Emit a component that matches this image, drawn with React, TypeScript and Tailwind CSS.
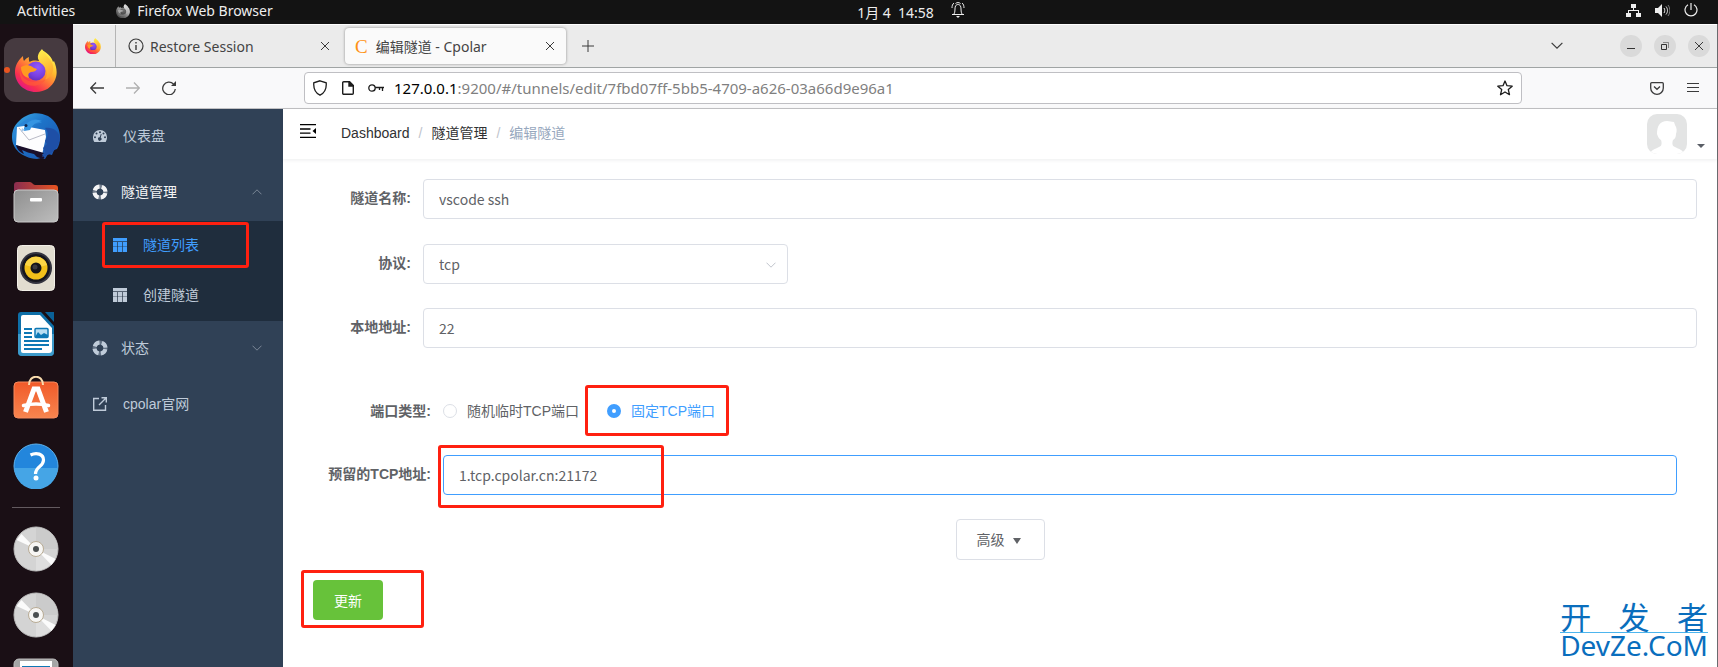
import React, { useState } from "react";

type IconProps = { className?: string };

function FirefoxIcon({ className, id }: IconProps & { id: string }) {
  return (
    <svg viewBox="0 0 42 43" className={className} aria-hidden="true">
      <defs>
        <linearGradient id={`${id}-body`} x1="0.85" y1="0.1" x2="0.2" y2="0.95">
          <stop offset="0" stopColor="#fff44f" />
          <stop offset="0.3" stopColor="#ffb92e" />
          <stop offset="0.55" stopColor="#ff7139" />
          <stop offset="0.8" stopColor="#f8304f" />
          <stop offset="1" stopColor="#e31587" />
        </linearGradient>
        <radialGradient id={`${id}-globe`} cx="0.6" cy="0.3" r="0.8">
          <stop offset="0" stopColor="#9059ff" />
          <stop offset="0.6" stopColor="#7a3fe0" />
          <stop offset="1" stopColor="#5b2bb8" />
        </radialGradient>
        <linearGradient id={`${id}-tail`} x1="0" y1="0" x2="0.3" y2="1">
          <stop offset="0" stopColor="#fff44f" />
          <stop offset="1" stopColor="#ffa52e" />
        </linearGradient>
      </defs>
      <path
        d="M8 7c0 2 .4 3.600 1 5 1.400-1.800 3-3.200 5-4-.4 2-.2 3.600.6 5C18 11 24 11 28 14L27 1c7 4 10 8 11 12l1-1c3 7 3.600 13 1 19-3 7-10 12-19 12C9 43 0 34 0 23 0 18 2 12 8 7z"
        fill={`url(#${id}-body)`}
      />
      <circle cx="21" cy="22" r="9.500" fill={`url(#${id}-globe)`} />
      <path
        d="M27 0c-5 5-6 10 0 15 5 4 7 9 3 16 6-3 9-8 8-14-1-7-7-9-11-17z"
        fill={`url(#${id}-tail)`}
      />
      <path d="M6 18c5-3 10-2 13 1l3 1c-1 2-3 3-6 3-3 1-3 3-2 6-5-1-8-5-8-11z" fill="#ff9a20" />
      <path d="M5 20c1 7 4 10 9 12 6 2 12 1 17-2-4 6-11 8-18 6C7 34 4 28 5 20z" fill="#ff5a38" opacity="0.7" />
    </svg>
  );
}

function ThunderbirdIcon() {
  return (
    <svg viewBox="0 0 48 48" className="size-12" aria-hidden="true">
      <defs>
        <linearGradient id="tb-body" x1="0" y1="0" x2="1" y2="1">
          <stop offset="0" stopColor="#3fb0e8" />
          <stop offset="0.4" stopColor="#1d74c9" />
          <stop offset="1" stopColor="#1c4fa8" />
        </linearGradient>
      </defs>
      <path d="M16 3C22 0 30 1 36 4c8 5 12 13 12 21 0 5-1 9-3 12l-3 1-2 5-4-1-3 5-4-1-4 1C10 46 0 37 0 25 0 15 6 9 12 5z" fill="url(#tb-body)" />
      <path d="M1 23c0-6 6-11 13-15 6-3 12-1 16 3-7 0-12 2-17 6z" fill="#2b86d6" />
      <path d="M5 15l7-1 21 4 1 7-4 18L4 33z" fill="#fdfdfe" />
      <path d="M7 16l10 12 16-6" fill="none" stroke="#b9bac6" strokeWidth="1" />
      <path d="M4 33l28 8-2 2c3 2 3 3 1 4l-6-2-3-3c-4-1-8-2-12-4l2 4C7 40 5 37 4 33z" fill="#1a0f2a" />
      <path d="M33 16c4 4 3 9 0 13l2 3-4 4 2 4-3 5c9-2 16-8 18-18-1-9-8-12-15-11z" fill="#1e4fa6" />
      <path d="M12 16c3-7 10-10 18-7-6 1-10 4-12 9l-6 1z" fill="#3595e2" />
      <circle cx="14" cy="13.500" r="1.500" fill="#10264f" />
      <path d="M10 16l-1 4 4-2z" fill="#a9c9ea" />
    </svg>
  );
}

function FilesIcon() {
  return (
    <svg viewBox="0 0 46 42" className="w-[46px]" aria-hidden="true">
      <defs>
        <linearGradient id="folder-back" x1="0" x2="1">
          <stop offset="0" stopColor="#8a2d50" />
          <stop offset="1" stopColor="#e95420" />
        </linearGradient>
        <linearGradient id="folder-front" x1="0" y1="0" x2="1" y2="1">
          <stop offset="0" stopColor="#8f8f8f" />
          <stop offset="1" stopColor="#bdbdbd" />
        </linearGradient>
      </defs>
      <path d="M1 4a3 3 0 013-3h13c2 0 3 3 5 3h20a3 3 0 013 3v14H1z" fill="url(#folder-back)" />
      <rect x="1" y="9" width="44" height="32" rx="4" fill="url(#folder-front)" stroke="#c9c9c9" />
      <rect x="17" y="17" width="12" height="3.500" rx="1" fill="#fff" />
    </svg>
  );
}

function RhythmboxIcon() {
  return (
    <svg viewBox="0 0 38 46" className="w-[38px]" aria-hidden="true">
      <rect x="0.500" y="0.500" width="37" height="45" rx="4" fill="#e2ddd0" stroke="#f3f0e8" />
      <circle cx="19" cy="23" r="16" fill="#34343f" />
      <circle cx="19" cy="23" r="14" fill="#15151d" />
      <circle cx="19" cy="23" r="11.500" fill="#f2c01a" />
      <path d="M8 20a11.500 11.500 0 0122 0L19 23z" fill="#fbd546" />
      <circle cx="19" cy="23" r="5.500" fill="#15151a" />
      <circle cx="18" cy="22" r="2.500" fill="#3a3a40" />
    </svg>
  );
}

function WriterIcon() {
  return (
    <svg viewBox="0 0 38 46" className="w-[38px]" aria-hidden="true">
      <path d="M4 1h20l13 14v26a4 4 0 01-4 4H5a4 4 0 01-4-4V4a3 3 0 013-3z" fill="#0e6fa8" />
      <path d="M1 23h36v18a4 4 0 01-4 4H5a4 4 0 01-4-4z" fill="#3d9bcb" />
      <path d="M28 1h9v10z" fill="#0a6197" />
      <path d="M6 4h17l12 13v22a3 3 0 01-3 3H6a2 2 0 01-2-2V6a2 2 0 012-2z" fill="#fff" />
      <path d="M7 18h8M7 22h8M7 26h8M7 30h25M7 34h25M7 38h18" stroke="#0e78b5" strokeWidth="2" />
      <rect x="18" y="17.500" width="13" height="9" rx="1" fill="#b9def2" stroke="#0e78b5" strokeWidth="1.500" />
      <path d="M18 26l3-5 3 3 3-2 4 2v2z" fill="#0e78b5" />
    </svg>
  );
}

function SoftwareIcon() {
  return (
    <svg viewBox="0 1 46 48" className="w-[46px]" aria-hidden="true">
      <defs>
        <linearGradient id="bag" x1="0" y1="0" x2="0" y2="1">
          <stop offset="0" stopColor="#f15a29" />
          <stop offset="1" stopColor="#f7854f" />
        </linearGradient>
      </defs>
      <rect x="1" y="7" width="44" height="36" rx="4" fill="url(#bag)" stroke="#f58a5e" />
      <path d="M16 10c0-11 14-11 14 0" fill="none" stroke="#f9dcae" strokeWidth="2" />
      <path d="M12.500 37L21 14h4l8.500 23" fill="none" stroke="#fff" strokeWidth="5" />
      <path d="M10.500 30.500q12.500-3 25 0" fill="none" stroke="#fff" strokeWidth="3.500" strokeLinecap="round" />
    </svg>
  );
}

function HelpIcon() {
  return (
    <svg viewBox="0 0 46 46" className="w-[46px]" aria-hidden="true">
      <circle cx="23" cy="23" r="22" fill="#2386dc" stroke="#5db2ee" />
      <path d="M1.500 25h43a21.500 21.500 0 01-43 0z" fill="#45a5e6" />
      <path d="M17.500 12c6-3 13-1 13 5 0 7-8 6-8 14" fill="none" stroke="#fff" strokeWidth="3.200" />
      <circle cx="23" cy="35" r="2.500" fill="#fff" />
    </svg>
  );
}

function DiscIcon() {
  return (
    <svg viewBox="0 0 46 46" className="w-[46px]" aria-hidden="true">
      <circle cx="23" cy="23" r="22" fill="#d4d4d4" stroke="#bdbdbd" />
      <path d="M23 23V1.500A21.500 21.500 0 0144.500 23z" fill="#cbcbcb" />
      <path d="M23 23v21.500A21.500 21.500 0 0042 33z" fill="#dedede" />
      <path d="M23 23L3.500 14l5-6zM23 23l19.500 10-4 6z" fill="#fbfbfb" />
      <circle cx="23" cy="23" r="7.500" fill="#f7f6f4" stroke="#b8ab94" />
      <circle cx="23" cy="23" r="3" fill="#4b4f50" />
    </svg>
  );
}

function FloppyIcon() {
  return (
    <svg viewBox="0 0 46 46" className="w-[46px]" aria-hidden="true">
      <rect x="1" y="1" width="44" height="44" rx="5" fill="#a4a5a5" stroke="#bdbdbd" />
      <rect x="7" y="3" width="32" height="26" fill="#fff" />
      <path d="M9 9h28" stroke="#0e78b5" strokeWidth="2" />
    </svg>
  );
}

function GaugeIcon() {
  return (
    <svg viewBox="0 0 14 12" className="w-3.5 shrink-0" aria-hidden="true">
      <path
        fillRule="evenodd"
        fill="currentColor"
        d="M7 0a7 7 0 017 7c0 2-.5 3.500-1.300 5H1.300A8 8 0 010 7a7 7 0 017-7zM7 1.200a1 1 0 100 2 1 1 0 000-2zM3.500 2.600a1 1 0 100 2 1 1 0 000-2zM10.500 2.600a1 1 0 100 2 1 1 0 000-2zM2 6.200a1 1 0 100 2 1 1 0 000-2zM12 6.200a1 1 0 100 2 1 1 0 000-2zM7.800 4l-1.100 3.300a1.700 1.700 0 101 .300L8.700 4.300z"
      />
    </svg>
  );
}

function RingIcon() {
  return (
    <svg viewBox="0 0 16 16" className="size-4 shrink-0" aria-hidden="true">
      <circle cx="8" cy="8" r="5.500" fill="none" stroke="currentColor" strokeWidth="4" opacity="0.35" />
      <circle cx="8" cy="8" r="5.500" fill="none" stroke="currentColor" strokeWidth="4" strokeDasharray="6.240 2.400" strokeDashoffset="-1.200" />
    </svg>
  );
}

function TableIcon() {
  return (
    <svg viewBox="0 0 14 14" className="size-3.5 shrink-0" aria-hidden="true">
      <path d="M0 0h14v14H0z" fill="currentColor" />
      <path d="M0 3.500h14M4.500 4v10M9.500 4v10" stroke="#1f2d3d" opacity="0.65" />
      <path d="M0 8.500h14" stroke="#1f2d3d" opacity="0.35" />
    </svg>
  );
}

function LinkIcon() {
  return (
    <svg viewBox="0 0 14 14" className="size-3.5 shrink-0" fill="none" stroke="currentColor" strokeWidth="1.400" aria-hidden="true">
      <path d="M6 1.500H.7v11.800h11.800V8M8.500.7h4.800v4.800M13 1L6 8" />
    </svg>
  );
}

function Chevron({ up = false, className = "" }: { up?: boolean; className?: string }) {
  return (
    <svg viewBox="0 0 10 6" className={`w-2.5 ${className}`} fill="none" stroke="currentColor" aria-hidden="true">
      <path d={up ? "M.5 5.300L5 .8l4.500 4.500" : "M.5.7L5 5.200 9.500.7"} />
    </svg>
  );
}

function CloseIcon() {
  return (
    <svg viewBox="0 0 8 8" className="size-2" fill="none" stroke="#3b3b3b" aria-hidden="true">
      <path d="M0 0l8 8M8 0L0 8" />
    </svg>
  );
}

// red frame used to call out a control
function Mark({ className }: { className: string }) {
  return <span aria-hidden="true" className={`pointer-events-none absolute rounded-[3px] border-3 border-[#ff2010] ${className}`} />;
}

const dockItems = [
  { name: "Thunderbird", icon: <ThunderbirdIcon /> },
  { name: "Files", icon: <FilesIcon /> },
  { name: "Rhythmbox", icon: <RhythmboxIcon /> },
  { name: "Writer", icon: <WriterIcon /> },
  { name: "Software", icon: <SoftwareIcon /> },
  { name: "Help", icon: <HelpIcon /> },
];

const mounts = [
  { name: "Disc 1", icon: <DiscIcon /> },
  { name: "Disc 2", icon: <DiscIcon /> },
  { name: "Floppy", icon: <FloppyIcon /> },
];

function TopBar() {
  return (
    <header className="grid h-6 shrink-0 grid-cols-3 items-center bg-[#131313] text-[14px] leading-5 text-[#eeeeee]">
      <div className="flex items-center pb-0.5 pl-[17px]">
        <button>Activities</button>
        <button className="ml-[41px] flex items-center gap-[7px]">
          <FirefoxIcon id="fx-top" className="w-3.5 grayscale" />
          Firefox Web Browser
        </button>
      </div>
      <div className="flex items-center justify-center pl-[104px]">
        <span className="pt-0.5 whitespace-pre">1月 4  14:58</span>
        <svg viewBox="0 0 14 16" className="mb-1 ml-[17px] w-3.5" fill="none" stroke="#eeeeee" aria-hidden="true">
          <path d="M1 12.500h12M3 12c1.500-2 .5-6 1.500-8 1-2 4-2 5 0s0 6 1.500 8M1 6c0-2 .5-4 2-5M13 6c0-2-.5-4-2-5M4.500 1.500C6 .3 8 .3 9.500 1.500" />
          <path d="M5 14h4l-2 2z" fill="#eeeeee" stroke="none" />
        </svg>
      </div>
      <div className="flex items-center justify-end gap-3.5 pr-5 pb-1">
        <svg viewBox="0 0 15 13" className="w-[15px]" fill="#eeeeee" aria-hidden="true">
          <path d="M5 0h5v4H8v2h5v3h2v4h-5V9h2V7H3v2h2v4H0V9h2V6h5V4H5z" />
        </svg>
        <svg viewBox="0 0 15 13" className="w-[15px]" fill="none" stroke="#eeeeee" aria-hidden="true">
          <path d="M0 4h3l4-4v13L3 9H0z" fill="#eeeeee" stroke="none" />
          <path d="M9 4c1 1.500 1 3.500 0 5M11 2.500c2 2.500 2 5.500 0 8" />
          <path d="M13 1c2.500 3.500 2.500 7.500 0 11" opacity="0.5" />
        </svg>
        <svg viewBox="0 0 14 14" className="w-3.5" fill="none" stroke="#eeeeee" strokeWidth="1.200" aria-hidden="true">
          <path d="M7 0v7M4 1.700a6 6 0 106 0" />
        </svg>
      </div>
    </header>
  );
}

function Dock() {
  return (
    <nav aria-label="Dock" className="flex w-[73px] shrink-0 flex-col items-center overflow-hidden bg-[#1a0f15] pt-[13px] pr-px">
      <button aria-label="Firefox" className="relative flex h-[66px] w-full shrink-0 items-center justify-center">
        <span className="flex size-16 items-center justify-center rounded-xl bg-[#463a40]">
          <FirefoxIcon id="fx-dock" className="w-[42px]" />
        </span>
        <span className="absolute left-1 size-1.5 rounded-full bg-[#e95420]" />
      </button>
      {dockItems.map((d) => (
        <button key={d.name} aria-label={d.name} className="flex h-[66px] shrink-0 items-center justify-center">
          {d.icon}
        </button>
      ))}
      <hr className="my-2 h-px w-12 shrink-0 border-0 bg-[#635a5f]" />
      {mounts.map((d) => (
        <button key={d.name} aria-label={d.name} className="flex h-[66px] shrink-0 items-center justify-center">
          {d.icon}
        </button>
      ))}
    </nav>
  );
}

function TabBar() {
  return (
    <div className="flex h-11 shrink-0 items-center border-t border-b border-t-white border-b-[#a0a4a4] bg-[#ebebeb] text-[14px] text-[#444444]">
      <button aria-label="Pinned tab" className="flex h-full w-[43px] items-center justify-center border-r border-[#b5b5b5] pr-0.5">
        <FirefoxIcon id="fx-tab" className="w-4" />
      </button>
      <div className="flex w-[229px] items-center pr-4 pl-3">
        <svg viewBox="0 0 16 16" className="mr-1.5 size-4" fill="none" stroke="#3b3b3b" aria-hidden="true">
          <circle cx="8" cy="8" r="7" strokeWidth="1.200" />
          <path d="M8 7v5M8 4v1.500" strokeWidth="1.400" />
        </svg>
        <span className="flex-1">Restore Session</span>
        <button aria-label="Close Restore Session"><CloseIcon /></button>
      </div>
      <div className="flex h-9 w-[221px] items-center rounded bg-[#fafafa] pr-3 pl-2.5 shadow-[0_0_3px_rgba(0,0,0,0.4)]">
        <span aria-hidden="true" className="mr-2 font-[Liberation_Serif,serif] text-[19px] leading-none text-[#ff9214]">C</span>
        <span className="flex-1">编辑隧道 - Cpolar</span>
        <button aria-label="Close Cpolar"><CloseIcon /></button>
      </div>
      <button aria-label="New tab" className="ml-4">
        <svg viewBox="0 0 12 12" className="size-3" stroke="#3b3b3b" aria-hidden="true">
          <path d="M6 0v12M0 6h12" />
        </svg>
      </button>
      <div className="ml-auto flex items-center gap-3 pr-[7px]">
        <button aria-label="List all tabs" className="mr-[45px]">
          <Chevron className="w-3 text-[#3b3b3b]" />
        </button>
        <button aria-label="Minimize" className="flex size-[22px] items-center justify-center rounded-full bg-[#dadada]">
          <span className="mt-1 h-px w-2 bg-[#333333]" />
        </button>
        <button aria-label="Restore" className="flex size-[22px] items-center justify-center rounded-full bg-[#dadada]">
          <svg viewBox="0 0 8 8" className="size-2" fill="none" stroke="#333333" aria-hidden="true">
            <path d="M.5 2.500h5v5h-5z" />
            <path d="M2 .5h5.500V6" opacity="0.5" />
          </svg>
        </button>
        <button aria-label="Close" className="flex size-[22px] items-center justify-center rounded-full bg-[#dadada]">
          <CloseIcon />
        </button>
      </div>
    </div>
  );
}

function UrlBar() {
  const [url] = useState({ host: "127.0.0.1", path: ":9200/#/tunnels/edit/7fbd07ff-5bb5-4709-a626-03a66d9e96a1" });
  return (
    <div className="flex h-[41px] shrink-0 items-center border-b border-[#c2c2c4] bg-[#f9f9fa] pr-[18px] pl-[17px] text-[#3b3b3b]">
      <div className="flex w-[214px] items-center gap-[22px]">
        <button aria-label="Back">
          <svg viewBox="0 0 14 12" className="w-3.5" fill="none" stroke="currentColor" strokeWidth="1.300" aria-hidden="true">
            <path d="M14 6H1M6 .5L.7 6 6 11.500" />
          </svg>
        </button>
        <button aria-label="Forward" className="text-[#b0b0b0]">
          <svg viewBox="0 0 14 12" className="w-3.5" fill="none" stroke="currentColor" strokeWidth="1.300" aria-hidden="true">
            <path d="M0 6h13M8 .5L13.300 6 8 11.500" />
          </svg>
        </button>
        <button aria-label="Reload">
          <svg viewBox="0 0 14 14" className="w-3.5" fill="none" stroke="currentColor" strokeWidth="1.300" aria-hidden="true">
            <path d="M11.500 3A6.300 6.300 0 1013.300 8" />
            <path d="M14 0v5H9z" fill="currentColor" stroke="none" />
          </svg>
        </button>
      </div>
      <div className="flex h-8 flex-1 items-center rounded border border-[#bfbfc3] bg-white px-2">
        <svg viewBox="0 0 14 16" className="w-3.5" fill="none" stroke="#1c1c1c" strokeWidth="1.300" aria-hidden="true">
          <path d="M7 .8l6.200 2c.5 6-1.500 10-6.200 12.400C2.300 12.800.3 8.800.8 2.800z" />
        </svg>
        <svg viewBox="0 0 12 14" className="ml-[15px] w-3" fill="none" stroke="#1c1c1c" strokeWidth="1.400" aria-hidden="true">
          <path d="M.7 1.700a1 1 0 011-1H7.500l3.800 3.800v7.800a1 1 0 01-1 1H1.700a1 1 0 01-1-1z" />
          <path d="M7 .5v4.500h4.500z" fill="#1c1c1c" />
        </svg>
        <svg viewBox="0 0 16 8" className="ml-3.5 w-4" fill="none" stroke="#1c1c1c" strokeWidth="1.300" aria-hidden="true">
          <circle cx="4" cy="4" r="3.200" />
          <path d="M7.200 3.500H16M11.500 3.500V6M14.500 3.500V7" />
        </svg>
        <span className="ml-2.5 flex-1 text-[15px] text-[#7f7f7f]">
          <span className="text-black">{url.host}</span>
          {url.path}
        </span>
        <button aria-label="Bookmark">
          <svg viewBox="0 0 16 16" className="size-4" fill="none" stroke="#1c1c1c" strokeWidth="1.300" strokeLinejoin="round" aria-hidden="true">
            <path d="M8 1l2 4.700 5.200.5-3.900 3.400 1.200 5.100L8 12l-4.500 2.700 1.200-5.100L.8 6.200 6 5.700z" />
          </svg>
        </button>
      </div>
      <button aria-label="Pocket" className="ml-32">
        <svg viewBox="0 0 14 13" className="w-3.5" fill="none" stroke="currentColor" strokeWidth="1.300" aria-hidden="true">
          <path d="M.7 1.700a1 1 0 011-1h10.600a1 1 0 011 1V6a6.300 6.300 0 01-12.600 0z" />
          <path d="M4 4.500l3 2.800 3-2.800" />
        </svg>
      </button>
      <button aria-label="Menu" className="ml-[23px]">
        <svg viewBox="0 0 12 10" className="w-3" stroke="currentColor" aria-hidden="true">
          <path d="M0 .5h12M0 4.500h12M0 8.500h12" />
        </svg>
      </button>
    </div>
  );
}

function Sidebar() {
  return (
    <nav aria-label="Main" className="w-[210px] shrink-0 bg-[#304156] text-[14px] text-[#bfcbd9]">
      <a href="#/dashboard" className="flex h-14 items-center gap-4 px-5 pb-0.5">
        <GaugeIcon />
        仪表盘
      </a>
      <button className="flex h-14 w-full items-center gap-3 pr-5 pb-0.5 pl-[19px] text-[#f4f4f5]">
        <RingIcon />
        <span className="pl-px">隧道管理</span>
        <Chevron up className="mr-px ml-auto text-[#7b8797]" />
      </button>
      <div className="bg-[#1f2d3d]">
        <a href="#/tunnels/list" className="relative flex h-[50px] items-center gap-4 px-10 pb-0.5 text-[#409eff]">
          <TableIcon />
          隧道列表
          <Mark className="top-px right-[34px] bottom-[3px] left-[29px]" />
        </a>
        <a href="#/tunnels/create" className="flex h-[50px] items-center gap-4 px-10 pb-0.5">
          <TableIcon />
          创建隧道
        </a>
      </div>
      <button className="flex h-14 w-full items-center gap-3 pr-5 pb-0.5 pl-[19px]">
        <RingIcon />
        <span className="pl-px">状态</span>
        <Chevron className="mr-px ml-auto text-[#7b8797]" />
      </button>
      <a href="https://www.cpolar.com" className="flex h-14 items-center gap-4 px-5 pb-0.5">
        <LinkIcon />
        cpolar官网
      </a>
    </nav>
  );
}

function Navbar() {
  return (
    <div className="flex h-[50px] items-center bg-white pr-3 pl-[17px] text-[14px] shadow-[0_1px_4px_rgba(0,21,41,0.08)]">
      <button aria-label="Toggle sidebar" className="mr-[25px] mb-1.5">
        <svg viewBox="0 0 16 14" className="w-4" fill="none" stroke="#000" strokeWidth="1.300" aria-hidden="true">
          <path d="M0 .7h16M0 5h10.500M0 9.200h10.500M0 13.300h16" />
          <path d="M16 4v6l-3.500-3z" fill="#000" stroke="none" />
        </svg>
      </button>
      <nav aria-label="Breadcrumb" className="mb-0.5 flex gap-[9px] text-[#303133]">
        <a href="#/dashboard">Dashboard</a>
        <span className="text-[#c0c4cc]">/</span>
        <a href="#/tunnels">隧道管理</a>
        <span className="text-[#c0c4cc]">/</span>
        <span className="text-[#97a8be]">编辑隧道</span>
      </nav>
      <button aria-label="Account" className="ml-auto flex items-end gap-2.5">
        <svg viewBox="0 0 40 40" className="size-10 rounded-[10px]" aria-hidden="true">
          <path d="M0 0h40v40H0z" fill="#e3e4e4" />
          <path d="M3 40c1-4 5-5 9-7 3-1 3-4 2-7-2-1-3-3-4-6 0-8 3-13 10-13 3 0 4 1 7 1l1 3c2 3 2 6 1 9 0 3-1 5-3 6-1 3-1 6 2 7 4 2 8 3 9 7z" fill="#fff" />
        </svg>
        <svg viewBox="0 0 8 4" className="mb-1.5 w-2" fill="#5a5e66" aria-hidden="true">
          <path d="M0 0h8L4 4z" />
        </svg>
      </button>
    </div>
  );
}

const labelClass = "w-[120px] shrink-0 pr-3 text-right leading-[38px] font-bold whitespace-nowrap";
const inputClass =
  "h-10 rounded border px-[15px] font-[Noto_Sans_CJK_SC,sans-serif] text-[14px] text-[#606266] outline-none";

function TunnelForm() {
  const [name, setName] = useState("vscode ssh");
  const [protocol, setProtocol] = useState("tcp");
  const [localAddr, setLocalAddr] = useState("22");
  const [portType, setPortType] = useState<"random" | "fixed">("fixed");
  const [remoteAddr, setRemoteAddr] = useState("1.tcp.cpolar.cn:21172");

  return (
    <form onSubmit={(e) => e.preventDefault()} className="p-5 text-[14px] text-[#606266]">
      <div className="mb-[25px] flex">
        <label htmlFor="name" className={labelClass}>隧道名称:</label>
        <input id="name" value={name} onChange={(e) => setName(e.target.value)} className={`${inputClass} min-w-0 flex-1 border-[#dcdfe6]`} />
      </div>

      <div className="mb-6 flex">
        <label htmlFor="protocol" className={labelClass}>协议:</label>
        <div className="relative w-[365px]">
          <select
            id="protocol"
            value={protocol}
            onChange={(e) => setProtocol(e.target.value)}
            className={`${inputClass} w-full appearance-none border-[#dcdfe6] bg-white pt-px`}
          >
            <option value="tcp">tcp</option>
            <option value="http">http</option>
          </select>
          <Chevron className="pointer-events-none absolute top-[18px] right-3 text-[#c0c4cc]" />
        </div>
      </div>

      <div className="mb-[43px] flex">
        <label htmlFor="local" className={labelClass}>本地地址:</label>
        <input id="local" value={localAddr} onChange={(e) => setLocalAddr(e.target.value)} className={`${inputClass} min-w-0 flex-1 border-[#dcdfe6]`} />
      </div>

      <div className="mx-5">
        <div role="radiogroup" aria-labelledby="port-type" className="mb-6 flex h-10 items-center">
          <span id="port-type" className={labelClass}>端口类型:</span>
          <label className="flex items-center gap-2.5">
            <input
              type="radio"
              name="port"
              checked={portType === "random"}
              onChange={() => setPortType("random")}
              className="size-3.5 appearance-none rounded-full border border-[#dcdfe6] bg-white checked:border-5 checked:border-[#409eff]"
            />
            随机临时TCP端口
          </label>
          <label className="relative ml-7 flex items-center gap-2.5 text-[#409eff]">
            <input
              type="radio"
              name="port"
              checked={portType === "fixed"}
              onChange={() => setPortType("fixed")}
              className="size-3.5 appearance-none rounded-full border border-[#dcdfe6] bg-white checked:border-5 checked:border-[#409eff]"
            />
            固定TCP端口
            <Mark className="-top-4 -right-3.5 -bottom-3.5 -left-[22px]" />
          </label>
        </div>

        <div className="mb-6 flex">
          <label htmlFor="remote" className={labelClass}>预留的TCP地址:</label>
          <div className="relative flex min-w-0 flex-1">
            <input id="remote" value={remoteAddr} onChange={(e) => setRemoteAddr(e.target.value)} className={`${inputClass} min-w-0 flex-1 border-[#409eff]`} />
            <Mark className="-top-2.5 -left-[5px] h-[63px] w-[226px]" />
          </div>
        </div>
      </div>

      <div className="mb-5 flex justify-center">
        <button type="button" className="flex h-[41px] items-center gap-2 rounded border border-[#dcdfe6] px-5 pt-0.5">
          高级
          <svg viewBox="0 0 8 6" className="mr-[3px] w-2" fill="currentColor" aria-hidden="true">
            <path d="M0 0h8L4 6z" />
          </svg>
        </button>
      </div>

      <div className="relative ml-2.5 w-fit">
        <button type="submit" className="block h-10 rounded bg-[#67c23a] px-[21px] pt-0.5 text-white">更新</button>
        <Mark className="-top-2.5 -left-3 h-[58px] w-[123px]" />
      </div>
    </form>
  );
}

export default function App() {
  return (
    <div className="flex h-screen flex-col overflow-hidden bg-white font-[Noto_Sans,Noto_Sans_CJK_SC,sans-serif]">
      <TopBar />
      <div className="flex min-h-0 flex-1">
        <Dock />
        <div className="flex min-w-0 flex-1 flex-col border-r border-[#6a6b6e]">
          <TabBar />
          <UrlBar />
          <div className="flex min-h-0 flex-1 font-[Liberation_Sans,Noto_Sans_CJK_SC,sans-serif]">
            <Sidebar />
            <main className="min-w-0 flex-1">
              <Navbar />
              <TunnelForm />
            </main>
          </div>
        </div>
      </div>
      <div className="pointer-events-none absolute right-2.5 bottom-2.5 text-[#0a6ebd]">
        <div className="flex justify-between border-b border-[#4db5ee] text-[31px] leading-[30px]">
          <span>开</span>
          <span>发</span>
          <span>者</span>
        </div>
        <div className="text-[28px] leading-6">DevZe.CoM</div>
      </div>
    </div>
  );
}
